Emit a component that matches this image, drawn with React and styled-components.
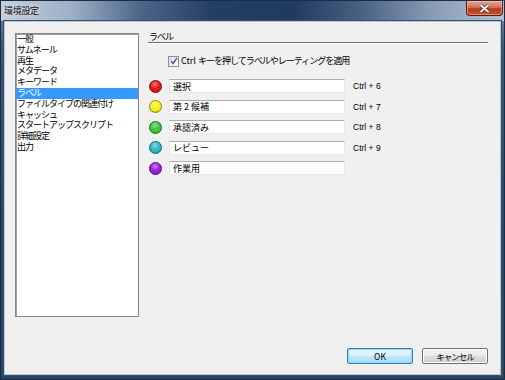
import React from 'react';
import styled, { createGlobalStyle } from 'styled-components';

const GlobalStyle = createGlobalStyle`
  html, body {
    margin: 0;
    padding: 0;
    width: 505px;
    height: 380px;
    overflow: hidden;
    background: #1f3656;
  }
  body {
    font-family: "Noto Sans CJK JP", "Liberation Sans", sans-serif;
  }
`;

const Window = styled.div`
  width: 505px;
  height: 380px;
  box-sizing: border-box;
  display: flex;
  flex-direction: column;
  background: linear-gradient(180deg, #8096b2 0%, #3d5779 12%, #2b4568 60%, #2a4466 100%);
  border: 1px solid #1b2c44;
  border-radius: 3px;
`;

const TitleBar = styled.div`
  height: 20px;
  display: flex;
  align-items: flex-start;
  justify-content: space-between;
  background: linear-gradient(90deg, #c3cedb 0%, #9eb0c5 14%, #4b6587 28%, #233f63 42%, #1f3b5e 58%, #4a6384 72%, #8a9db5 86%, #b1bfd0 100%);
`;

const Title = styled.span`
  padding: 4px 0 0 3px;
  font-size: 9px;
  line-height: 12px;
  letter-spacing: -0.3px;
  color: #111;
  text-shadow: 0 0 4px rgba(255, 255, 255, 0.9);
`;

const CloseButton = styled.div`
  width: 35px;
  height: 14px;
  margin-right: 1px;
  display: flex;
  align-items: center;
  justify-content: center;
  border: 1px solid #5a1d14;
  border-top: none;
  border-radius: 0 0 4px 4px;
  background: linear-gradient(180deg, #e8a493 0%, #d2735c 45%, #b33a1f 55%, #c8512f 100%);
  box-shadow: inset 0 0 0 1px rgba(255, 200, 180, 0.5);
`;

const Client = styled.div`
  flex: 1;
  margin: 0 3px 4px 3px;
  display: flex;
  flex-direction: column;
  background: #f0f0f0;
  border: 1px solid #b9c3cf;
  box-shadow: 0 0 0 1px #34507a;
`;

const Body = styled.div`
  flex: 1;
  display: flex;
  padding: 11px 12px 0 10px;
  gap: 9px;
`;

const ListBox = styled.ul`
  width: 124px;
  height: 284px;
  box-sizing: border-box;
  margin: 0;
  padding: 0;
  list-style: none;
  background: #fff;
  border: 1px solid #828790;
  box-shadow: inset 1px 1px 0 #a0a0a0;
`;

const ListItem = styled.li`
  height: 10.8px;
  line-height: 10.8px;
  padding-left: 1px;
  font-size: 9px;
  letter-spacing: -1px;
  color: ${(p) => (p.$selected ? '#fff' : '#000')};
  background: ${(p) => (p.$selected ? '#3399ff' : 'transparent')};
  white-space: nowrap;
`;

const Panel = styled.div`
  flex: 1;
  display: flex;
  flex-direction: column;
`;

const SectionTitle = styled.div`
  font-size: 9px;
  line-height: 8px;
  letter-spacing: -1px;
  padding: 0 0 1px 1px;
  border-bottom: 1px solid #6d6d6d;
  box-shadow: 0 1px 0 #fff;
  color: #000;
`;

const CheckRow = styled.label`
  display: flex;
  align-items: center;
  gap: 2px;
  margin: 12px 0 0 20px;
  font-size: 9px;
  line-height: 12px;
  letter-spacing: -1px;
  color: #000;
  white-space: pre;
`;

const Latin = styled.span`
  letter-spacing: 0;
`;

const CheckBox = styled.span`
  width: 9px;
  height: 9px;
  display: flex;
  align-items: center;
  justify-content: center;
  border: 1px solid #8e8f8f;
  background: linear-gradient(135deg, #dcdcdc, #fff);
`;

const Rows = styled.div`
  display: flex;
  flex-direction: column;
  gap: 5.5px;
  margin-top: 11.5px;
`;

const Row = styled.div`
  height: 15px;
  display: flex;
  align-items: center;
`;

const Dot = styled.span`
  width: 11px;
  height: 11px;
  margin-left: 1px;
  border-radius: 50%;
  border: 1px solid ${(p) => p.$edge};
  background:
    radial-gradient(circle at 45% 30%, rgba(255, 255, 255, 0.45) 0%, rgba(255, 255, 255, 0) 45%),
    radial-gradient(circle at 50% 40%, ${(p) => p.$color} 60%, ${(p) => p.$edge} 115%);
`;

const Field = styled.div`
  width: 176px;
  height: 14px;
  box-sizing: border-box;
  margin-left: 7px;
  padding-left: 3px;
  display: flex;
  align-items: center;
  background: #fff;
  border: 1px solid #e3e9ef;
  border-top-color: #abadb3;
  font-size: 9px;
  color: #000;
  white-space: pre;
`;

const Shortcut = styled.span`
  margin-left: 8px;
  font-family: "Liberation Sans", sans-serif;
  font-size: 8.5px;
  color: #000;
`;

const Footer = styled.div`
  display: flex;
  justify-content: flex-end;
  gap: 9px;
  padding: 0 12px 10px 0;
`;

const Button = styled.button`
  width: 66px;
  height: 16px;
  padding: 0;
  font-family: "Noto Sans CJK JP", "Liberation Sans", sans-serif;
  font-size: 8.5px;
  letter-spacing: ${(p) => (p.$primary ? '0' : '-1px')};
  color: #000;
  border-radius: 2px;
  border: 1px solid ${(p) => (p.$primary ? '#3c7fb1' : '#707070')};
  background: ${(p) =>
    p.$primary
      ? 'linear-gradient(180deg, #eaf6fd 0%, #d9f0fc 45%, #bee6fd 55%, #a7d9f5 100%)'
      : 'linear-gradient(180deg, #f2f2f2 0%, #ebebeb 45%, #dddddd 55%, #cfcfcf 100%)'};
  box-shadow: inset 0 0 0 1px ${(p) => (p.$primary ? '#8fd3f7' : '#fcfcfc')};
`;

const items = [
  '一般',
  'サムネール',
  '再生',
  'メタデータ',
  'キーワード',
  'ラベル',
  'ファイルタイプの関連付け',
  'キャッシュ',
  'スタートアップスクリプト',
  '詳細設定',
  '出力',
];

const labels = [
  { name: '選択', key: 'Ctrl + 6', color: '#e8161a', edge: '#7a0a0a' },
  { name: '第 2 候補', key: 'Ctrl + 7', color: '#f2f21a', edge: '#8a8a10' },
  { name: '承認済み', key: 'Ctrl + 8', color: '#3cc43c', edge: '#1a6e1a' },
  { name: 'レビュー', key: 'Ctrl + 9', color: '#2fb6c6', edge: '#176670' },
  { name: '作業用', key: '', color: '#9a1ee2', edge: '#520c7a' },
];

export default function App() {
  return (
    <>
      <GlobalStyle />
      <Window>
        <TitleBar>
          <Title>環境設定</Title>
          <CloseButton>
            <svg width="11" height="9" viewBox="0 0 11 9">
              <path d="M1.5 1 L9.5 8 M9.5 1 L1.5 8" stroke="#5a1d14" strokeWidth="3.2" />
              <path d="M1.5 1 L9.5 8 M9.5 1 L1.5 8" stroke="#fff" strokeWidth="1.8" />
            </svg>
          </CloseButton>
        </TitleBar>
        <Client>
          <Body>
            <ListBox>
              {items.map((it) => (
                <ListItem key={it} $selected={it === 'ラベル'}>
                  {it}
                </ListItem>
              ))}
            </ListBox>
            <Panel>
              <SectionTitle>ラベル</SectionTitle>
              <CheckRow>
                <CheckBox>
                  <svg width="8" height="8" viewBox="0 0 8 8">
                    <path d="M1 4 L3 6.5 L7 1" fill="none" stroke="#4a5f97" strokeWidth="1.4" />
                  </svg>
                </CheckBox>
                <span>
                  <Latin>Ctrl </Latin>キーを押してラベルやレーティングを適用
                </span>
              </CheckRow>
              <Rows>
                {labels.map((l) => (
                  <Row key={l.name}>
                    <Dot $color={l.color} $edge={l.edge} />
                    <Field>{l.name}</Field>
                    {l.key && <Shortcut>{l.key}</Shortcut>}
                  </Row>
                ))}
              </Rows>
            </Panel>
          </Body>
          <Footer>
            <Button $primary>OK</Button>
            <Button>キャンセル</Button>
          </Footer>
        </Client>
      </Window>
    </>
  );
}
